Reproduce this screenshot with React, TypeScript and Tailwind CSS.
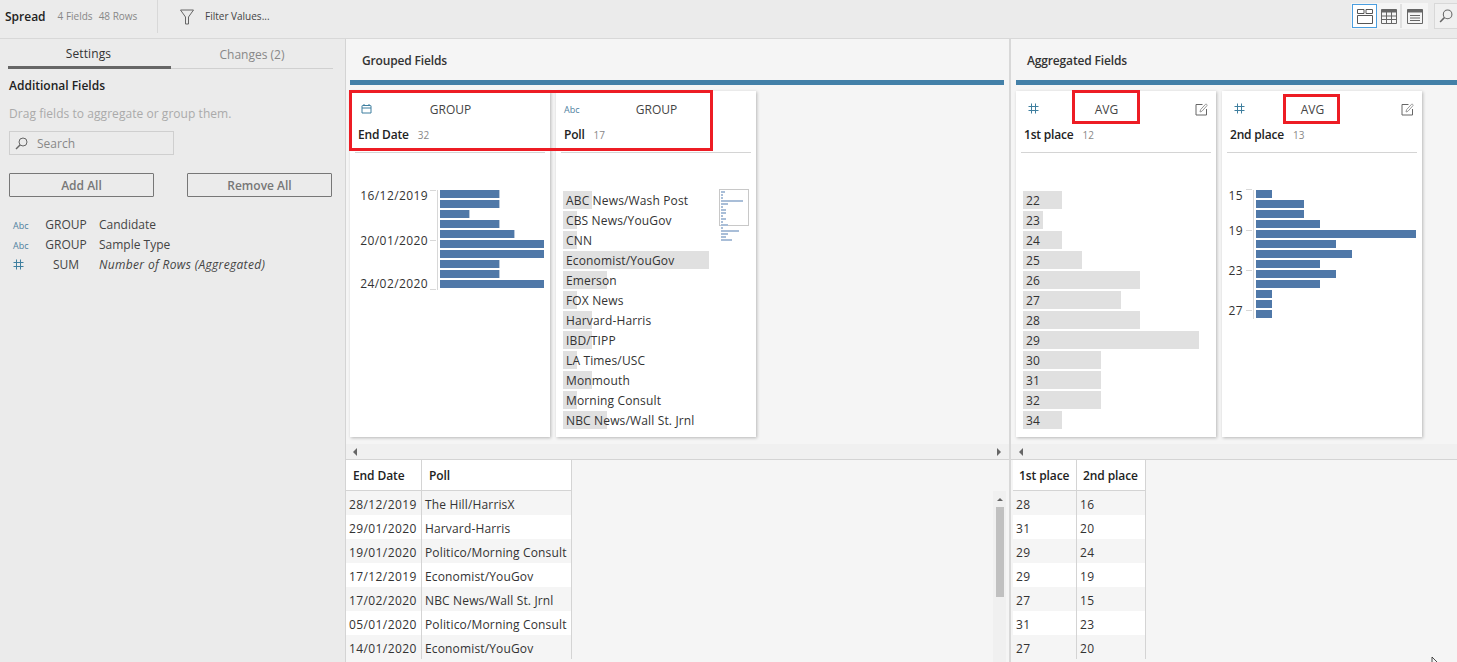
import React from "react";

const blue = "bg-[#4f78a8]";

const endDateBars = [59, 59, 29, 59, 74, 104, 104, 59, 59, 104];
const secondPlaceBars = [16, 48, 48, 64, 160, 80, 96, 64, 80, 64, 16, 16, 16];
const pollRows: [string, number][] = [
  ["ABC News/Wash Post", 29],
  ["CBS News/YouGov", 14],
  ["CNN", 14],
  ["Economist/YouGov", 146],
  ["Emerson", 44],
  ["FOX News", 14],
  ["Harvard-Harris", 29],
  ["IBD/TIPP", 29],
  ["LA Times/USC", 14],
  ["Monmouth", 29],
  ["Morning Consult", 14],
  ["NBC News/Wall St. Jrnl", 44],
];
const firstPlaceRows: [string, number][] = [
  ["22", 39],
  ["23", 20],
  ["24", 39],
  ["25", 59],
  ["26", 117],
  ["27", 98],
  ["28", 117],
  ["29", 176],
  ["30", 78],
  ["31", 78],
  ["32", 78],
  ["34", 39],
];
const minimapBars = [4, 2, 2, 22, 7, 2, 5, 5, 2, 5, 2, 7, 2, 18, 7, 5, 11];
const leftRows = [
  ["28/12/2019", "The Hill/HarrisX"],
  ["29/01/2020", "Harvard-Harris"],
  ["19/01/2020", "Politico/Morning Consult"],
  ["17/12/2019", "Economist/YouGov"],
  ["17/02/2020", "NBC News/Wall St. Jrnl"],
  ["05/01/2020", "Politico/Morning Consult"],
  ["14/01/2020", "Economist/YouGov"],
];
const rightRows = [
  ["28", "16"],
  ["31", "20"],
  ["29", "24"],
  ["29", "19"],
  ["27", "15"],
  ["31", "23"],
  ["27", "20"],
];

const HashIcon = () => (
  <svg width="12" height="12" viewBox="0 0 12 12" stroke="#3f7f9f" strokeWidth="1" fill="none">
    <path d="M3.5 0.5V10.5M7.5 0.5V10.5M0.5 3.5H10.5M0.5 7.5H10.5" />
  </svg>
);

const CalendarIcon = () => (
  <svg width="12" height="12" viewBox="0 0 12 12" stroke="#3f7f9f" strokeWidth="1" fill="none">
    <path d="M1.5 2.5H9.5a0.5 0.5 0 0 1 0.5 0.5V10H1V3a0.5 0.5 0 0 1 0.5-0.5ZM1 5H10M3 1V3M8 1V3" />
  </svg>
);

const AbcIcon = () => <span className="text-[9px] leading-none text-[#4f81a0]">Abc</span>;

const EditIcon = () => (
  <svg width="14" height="14" viewBox="0 0 14 14" fill="none" stroke="#666" strokeWidth="1">
    <path d="M8.5 2.5H2V13H12.5V7" />
    <path d="M6 10L6.6 7.6L11.6 2.2C12.2 1.7 13.6 2.9 13 3.6L8 9.2Z" stroke="#999" />
  </svg>
);

const SearchGlass = ({ size = 13 }: { size?: number }) => (
  <svg width={size} height={size} viewBox="0 0 13 13" fill="none" stroke="#666" strokeWidth="1">
    <circle cx="8" cy="5" r="4" />
    <path d="M5 8L1 12" strokeWidth="1.4" />
  </svg>
);

const ArrowLeft = () => <div className="h-0 w-0 border-y-[4px] border-r-[4px] border-y-transparent border-r-[#666]" />;
const ArrowRight = () => <div className="h-0 w-0 border-y-[4px] border-l-[4px] border-y-transparent border-l-[#666]" />;

type CardProps = {
  icon: React.ReactNode;
  iconClass: string;
  agg: string;
  name: string;
  count: string;
  edit?: boolean;
  children: React.ReactNode;
};

const Card = ({ icon, iconClass, agg, name, count, edit, children }: CardProps) => (
  <div className="relative h-[346px] w-[200px] shrink-0 bg-white shadow-[1px_1px_3px_rgba(0,0,0,0.25)]">
    <div className="flex h-9 items-center px-2">
      <div className={`flex w-5 items-center ${iconClass}`}>{icon}</div>
      <div className="flex-1 pl-px pt-[2px] text-center text-[12px] text-[#444]">{agg}</div>
      <div className={`flex items-center justify-end ${edit ? "w-10" : "w-5"}`}>{edit && <EditIcon />}</div>
    </div>
    <div className="flex h-[14px] items-center gap-[9px] px-2 pt-[2px]">
      <span className="text-[12px] font-semibold tracking-[-0.2px] text-[#222]">{name}</span>
      <span className="text-[10px] text-[#888]">{count}</span>
    </div>
    <div className="mx-[5px] mt-[11px] h-px bg-[#d4d4d4]" />
    {children}
  </div>
);

// binned bars with an axis on the left: labels are placed along the axis
const AxisBars = ({
  bars,
  labels,
  axisLeft,
  textRight,
  height,
  tail,
}: {
  bars: number[];
  labels: [string, number, number][];
  axisLeft: number;
  textRight: number;
  height: number;
  tail?: boolean;
}) => (
  <div className="relative mt-[37px]" style={{ height, paddingLeft: axisLeft + 3 }}>
    <div className="absolute top-0 w-px bg-[#d8d8d8]" style={{ left: axisLeft, height }} />
    {labels.map(([text, top, tick]) => (
      <React.Fragment key={text}>
        <div
          className="absolute text-right text-[12px] leading-4 tracking-[0.4px] text-[#333]"
          style={{ top: top - 8, right: 200 - textRight }}
        >
          {text}
        </div>
        <div className="absolute h-px w-[6px] bg-[#d8d8d8]" style={{ top: tick, left: axisLeft - 7 }} />
      </React.Fragment>
    ))}
    <div className="flex flex-col gap-[2px]">
      {bars.map((w, i) => (
        <div
          key={i}
          className={`h-2 ${blue} ${tail && w < 104 ? "shadow-[1px_0_0_#b8c8dc]" : ""}`}
          style={{ width: w }}
        />
      ))}
    </div>
  </div>
);

const LabelBars = ({ rows }: { rows: [string, number][] }) => (
  <div className="mt-[38px] flex flex-col gap-[2px] pl-[7px]">
    {rows.map(([text, w]) => (
      <div key={text} className="relative h-[18px]">
        <div className="absolute inset-y-0 left-0 bg-[#e0e0e0]" style={{ width: w }} />
        <div className="relative whitespace-nowrap pl-[3px] pt-px text-[12px] leading-[18px] tracking-[0.15px] text-[#333]">
          {text}
        </div>
      </div>
    ))}
  </div>
);

const Minimap = () => (
  <div className="absolute left-[163px] top-[98px] h-[37px] w-[30px] border border-[#c8c8c8]">
    <div className="ml-[1px] mt-[1px] flex w-[40px] flex-col gap-px">
      {minimapBars.map((w, i) => (
        <div key={i} className="h-[2px] bg-[#a9bed8]" style={{ width: w }} />
      ))}
    </div>
  </div>
);

const RedBox = ({ className }: { className: string }) => (
  <div className={`pointer-events-none absolute border-[3px] border-[#ed1c24] ${className}`} />
);

const DataTable = ({
  head,
  rows,
  widths,
  cellPad,
  tracking,
}: {
  head: string[];
  rows: string[][];
  widths: string[];
  cellPad: string;
  tracking: string[];
}) => (
  <div className="w-fit">
    <div className="flex h-[31px] items-center border-b border-[#d4d4d4] bg-white">
      {head.map((h, i) => (
        <div
          key={h}
          className={`flex h-full items-center whitespace-nowrap border-r border-[#d4d4d4] pt-[2px] text-[12px] font-semibold tracking-[-0.1px] text-[#222] ${widths[i]} ${cellPad}`}
        >
          {h}
        </div>
      ))}
    </div>
    {rows.map((row, r) => (
      <div key={r} className={`flex h-6 items-center ${r % 2 === 0 ? "bg-[#f5f5f5]" : "bg-white"}`}>
        {row.map((c, i) => (
          <div
            key={i}
            className={`flex h-full items-center whitespace-nowrap border-r border-[#d4d4d4] pl-[3px] pt-[4px] text-[12px] text-[#333] ${widths[i]} ${tracking[i]}`}
          >
            {c}
          </div>
        ))}
      </div>
    ))}
  </div>
);

const FieldRow = ({ icon, agg, name, italic }: { icon: React.ReactNode; agg: string; name: string; italic?: boolean }) => (
  <div className="flex h-5 items-center text-[12px] text-[#444]">
    <div className="flex w-[23px] items-center justify-start pl-[4px]">{icon}</div>
    <div className="w-[67px] pl-px text-center">{agg}</div>
    <div className={italic ? "italic tracking-[0.33px]" : ""}>{name}</div>
  </div>
);

export default function App() {
  return (
    <div className="relative flex h-[662px] w-[1457px] flex-col overflow-hidden bg-[#f5f5f5] font-['Open_Sans',sans-serif]">
      {/* Top bar */}
      <div className="flex h-[39px] shrink-0 items-start border-b border-[#d8d8d8] bg-[#ebebeb]">
        <div className="flex h-[33px] w-[158px] items-center border-r border-[#d8d8d8] pl-[5px]">
          <span className="text-[12px] font-semibold text-[#222]">Spread</span>
          <span className="ml-3 text-[10px] text-[#888]">4 Fields</span>
          <span className="ml-[6px] text-[10px] text-[#888]">48 Rows</span>
        </div>
        <div className="flex h-[33px] items-center pl-[22px]">
          <svg width="14" height="16" viewBox="0 0 14 16" fill="none" stroke="#666" strokeWidth="1">
            <path d="M0.5 1H13.5L8.5 8V15H5.5V8Z" />
          </svg>
          <span className="ml-[11px] text-[10px] text-[#444]">Filter Values...</span>
        </div>
        <div className="-mr-px ml-auto mt-[3px] flex items-start">
          <div className="flex h-[26px] items-center bg-[#f5f5f5] p-px">
            <div className="flex h-6 w-[25px] items-center justify-center border border-[#4a9ee0] bg-white">
              <svg width="16" height="15" viewBox="0 0 16 15" fill="none" stroke="#555" strokeWidth="1">
                <path d="M0.5 0.5H7V4.5H0.5ZM9 0.5H15.5V4.5H9ZM0.5 6.5H15.5V14.5H0.5Z" />
              </svg>
            </div>
            <div className="flex h-6 w-[25px] items-center justify-center border-r-2 border-[#e0e0e0]">
              <svg width="16" height="15" viewBox="0 0 16 15" fill="none" stroke="#666" strokeWidth="1">
                <path d="M0.5 0.5H15.5V14.5H0.5Z" />
                <path d="M0.5 2H15.5" strokeWidth="3" />
                <path d="M0.5 7H15.5M0.5 10.5H15.5M5.5 3V14.5M10.5 3V14.5" />
              </svg>
            </div>
            <div className="flex h-6 w-[25px] items-center justify-center">
              <svg width="16" height="15" viewBox="0 0 16 15" fill="none" stroke="#666" strokeWidth="1">
                <path d="M0.5 0.5H15.5V14.5H0.5Z" />
                <path d="M0.5 2H15.5" strokeWidth="3" />
                <path d="M3 6.5H13M3 9H13M3 11.5H13" />
              </svg>
            </div>
          </div>
          <div className="ml-[6px] flex h-[26px] w-[24px] items-center justify-center border border-[#d8d8d8] bg-[#f0f0f0]">
            <SearchGlass size={14} />
          </div>
        </div>
      </div>

      <div className="flex min-h-0 flex-1">
        {/* Sidebar */}
        <div className="w-[346px] shrink-0 border-r border-[#d4d4d4] bg-[#ebebeb] pl-[8px] pr-[12px]">
          <div className="flex h-[30px] border-b border-[#d0d0d0]">
            <div className="-mb-px w-[163px] border-b-[3px] border-[#666] pr-[2px] pt-[6px] text-center text-[12px] tracking-[0.1px] text-[#333]">
              Settings
            </div>
            <div className="flex-1 pt-[7px] text-center text-[12px] text-[#888]">Changes (2)</div>
          </div>
          <div className="pl-px">
            <div className="mt-[9px] text-[12px] font-semibold leading-4 text-[#222]">Additional Fields</div>
            <div className="mt-[12px] text-[12px] leading-4 tracking-[0.05px] text-[#aaa]">Drag fields to aggregate or group them.</div>
            <div className="mt-[9px] flex h-6 w-[165px] items-center gap-[9px] border border-[#cfcfcf] pl-[5px] text-[12px] text-[#888]">
              <SearchGlass />
              <span className="pt-[2px]">Search</span>
            </div>
            <div className="mt-[18px] flex w-[323px] justify-between">
              <button className="h-6 w-[145px] rounded-[1px] border border-[#777] pt-px text-[12px] font-semibold text-[#777]">
                Add All
              </button>
              <button className="h-6 w-[145px] rounded-[1px] border border-[#777] pt-px text-[12px] font-semibold text-[#777]">
                Remove All
              </button>
            </div>
            <div className="mt-[18px]">
              <FieldRow icon={<AbcIcon />} agg="GROUP" name="Candidate" />
              <FieldRow icon={<AbcIcon />} agg="GROUP" name="Sample Type" />
              <FieldRow icon={<HashIcon />} agg="SUM" name="Number of Rows (Aggregated)" italic />
            </div>
          </div>
        </div>

        {/* Grouped fields */}
        <div className="flex w-[663px] shrink-0 flex-col">
          <div className="flex h-[41px] shrink-0 items-center pl-4 pt-[3px] text-[12px] font-semibold tracking-[-0.15px] text-[#333]">Grouped Fields</div>
          <div className="ml-1 mr-[5px] h-[5px] shrink-0 bg-[#4380a8]" />
          <div className="relative ml-1 mt-[6px] flex h-[346px] shrink-0 gap-[6px]">
            <Card icon={<CalendarIcon />} iconClass="pl-[3px]" agg="GROUP" name="End Date" count="32">
              <AxisBars
                bars={endDateBars}
                labels={[
                  ["16/12/2019", 6, 0],
                  ["20/01/2020", 51, 50],
                  ["24/02/2020", 94, 99],
                ]}
                axisLeft={87}
                textRight={78}
                height={100}
                tail
              />
            </Card>
            <Card icon={<AbcIcon />} iconClass="" agg="GROUP" name="Poll" count="17">
              <LabelBars rows={pollRows} />
              <Minimap />
            </Card>
            <RedBox className="-left-px -top-px h-[61px] w-[364px]" />
          </div>
          <div className="mt-[7px] flex h-4 shrink-0 items-center justify-between border-b border-[#d4d4d4] bg-[#f0f0f0] pl-[7px] pr-[8px]">
            <ArrowLeft />
            <ArrowRight />
          </div>
          <div className="flex min-h-0 flex-1 justify-between">
            <DataTable
              head={["End Date", "Poll"]}
              rows={leftRows}
              widths={["w-[76px]", "w-[150px]"]}
              tracking={["tracking-[0.4px]", "tracking-[0.15px]"]}
              cellPad="pl-[7px]"
            />
            <div className="mr-[3px] mt-[31px] flex w-[13px] flex-col items-center bg-[#f0f0f0]">
              <div className="mt-[7px] h-0 w-0 border-x-[3px] border-b-[3px] border-x-transparent border-b-[#666]" />
              <div className="mt-[6px] h-[90px] w-2 bg-[#c0c0c0]" />
            </div>
          </div>
        </div>

        <div className="w-[2px] shrink-0 bg-[#d8d8d8]" />

        {/* Aggregated fields */}
        <div className="flex min-w-0 flex-1 flex-col">
          <div className="flex h-[41px] shrink-0 items-center pl-[16px] pt-[3px] text-[12px] font-semibold tracking-[-0.15px] text-[#333]">Aggregated Fields</div>
          <div className="ml-[5px] h-[5px] shrink-0 bg-[#4380a8]" />
          <div className="relative ml-[5px] mt-[6px] flex h-[346px] shrink-0 gap-[6px]">
            <Card icon={<HashIcon />} iconClass="pl-1" agg="AVG" name="1st place" count="12" edit>
              <LabelBars rows={firstPlaceRows} />
            </Card>
            <Card icon={<HashIcon />} iconClass="pl-1" agg="AVG" name="2nd place" count="13" edit>
              <AxisBars
                bars={secondPlaceBars}
                labels={[
                  ["15", 6, -1],
                  ["19", 41, 40],
                  ["23", 81, 80],
                  ["27", 121, 120],
                ]}
                axisLeft={31}
                textRight={21}
                height={129}
              />
            </Card>
            <RedBox className="left-[56px] -top-px h-[34px] w-[68px]" />
            <RedBox className="left-[267px] top-[3px] h-[30px] w-[57px]" />
          </div>
          <div className="mt-[7px] flex h-4 shrink-0 items-center border-b border-[#d4d4d4] bg-[#f0f0f0] pl-[8px]">
            <ArrowLeft />
          </div>
          <div className="pl-[2px]">
            <DataTable
              head={["1st place", "2nd place"]}
              rows={rightRows}
              widths={["w-[64px]", "w-[69px]"]}
              tracking={["tracking-[0.4px]", "tracking-[0.4px]"]}
              cellPad="pl-[6px]"
            />
          </div>
        </div>
      </div>

      {/* Mouse pointer at the bottom edge */}
      <svg className="absolute left-[1431px] top-[657px]" width="8" height="6" viewBox="0 0 8 6" fill="#fff" stroke="#222" strokeWidth="0.8">
        <path d="M1 0V6M1 0L6 5" />
      </svg>
    </div>
  );
}
